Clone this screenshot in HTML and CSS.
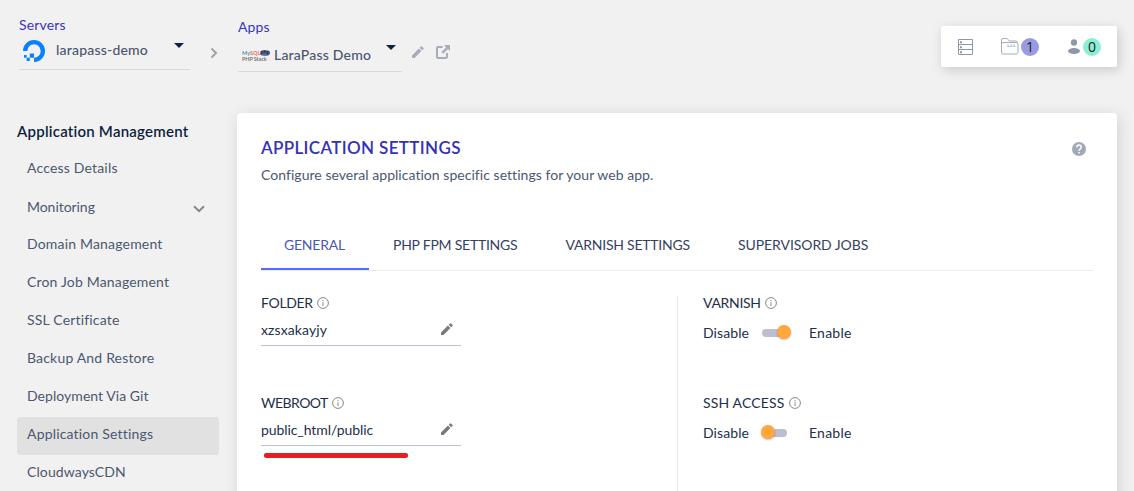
FILE: index.html
```html
<!DOCTYPE html>
<html lang="en">
<head>
<meta charset="utf-8">
<title>Application Settings</title>
<link rel="stylesheet" href="styles.css">
</head>
<body>
<svg class="defs" aria-hidden="true">
  <symbol id="pencil" viewBox="0 0 12 12"><path d="M0 9.400 6.900 2.500l2.500 2.500L2.500 11.900H0zM7.700 1.700 9 .4q.5-.5 1 0l1.500 1.500q.5.5 0 1L10.200 4.200z"/></symbol>
  <symbol id="info" viewBox="0 0 12 12"><circle cx="6" cy="6" r="5.400" fill="none" stroke="currentColor" stroke-width="1"/><path d="M5.500 5.200h1v3.900h-1zM5.500 3h1v1.200h-1z" fill="currentColor"/></symbol>
</svg>
<div class="page">
  <header class="topbar">
    <div class="picker picker-server">
      <div class="picker-label">Servers</div>
      <div class="picker-select">
        <svg class="ocean" viewBox="0 0 22 22"><path d="M11 22v-4.300A6.700 6.700 0 1 0 4.300 11H0A11 11 0 1 1 11 22z"/><path d="M6.800 13.500H11v4.200H6.800zM3.600 17.700h3.200v3.200H3.600zM1 15h2.600v2.700H1z"/></svg>
        <span class="picker-name">larapass-demo</span>
        <span class="caret"></span>
      </div>
    </div>
    <svg class="crumb" viewBox="0 0 8 12"><path d="M1.500 1.500 6 6l-4.500 4.500"/></svg>
    <div class="picker picker-app">
      <div class="picker-label">Apps</div>
      <div class="picker-select">
        <span class="stack">
          <span class="stack-top"><span class="my">My</span><span class="sql">SQL</span><span class="php">php</span></span>
          <span class="stack-name">PHP Stack</span>
        </span>
        <span class="picker-name">LaraPass Demo</span>
        <span class="caret"></span>
      </div>
    </div>
    <svg class="edit-app"><use href="#pencil"/></svg>
    <svg class="open-app" viewBox="0 0 14 14"><path d="M6.500 2H2.200Q1 2 1 3.200v8.600Q1 13 2.200 13h7.600q1.200 0 1.200-1.200V8" fill="none" stroke="#a5adba" stroke-width="2"/><path d="M8 0h6v6l-2-2-4.800 4.700-1.700-1.700L10.200 2.200z"/></svg>
    <div class="counts">
      <svg class="servers-icon" viewBox="0 0 16 16"><path d="M.5.5h14v15H.5zM.5 5.500h14M.5 10.500h14" fill="none" stroke="#8d97a8"/><path d="M2 2.200h2v2H2zM2 7.200h2v2H2zM2 12.200h2v2H2z" fill="#8d97a8"/></svg>
      <svg class="folder-icon" viewBox="0 0 18 17"><path d="M.5 14.500V2Q.5.500 2 .500h4.200L8.200 3H15q1 0 1 1v.8M.5 6.500Q.5 4.500 2 4.500h13.500q1.500 0 1.500 1.500v8.500q0 1.500-1.500 1.500H2Q.5 16 .5 14.500z" fill="none" stroke="#a5adba"/><path d="M6 7.200h9M6.500 8.500h8.500" stroke="#b4bac5" stroke-dasharray="2 1"/></svg>
      <span class="badge badge-projects">1</span>
      <svg class="user-icon" viewBox="0 0 12 16"><ellipse cx="6" cy="3.500" rx="3.100" ry="3.300"/><ellipse cx="6" cy="12" rx="6" ry="3"/></svg>
      <span class="badge badge-members">0</span>
    </div>
  </header>
  <div class="body">
    <nav class="sidebar">
      <h2 class="side-title">Application Management</h2>
      <a class="side-item">Access Details</a>
      <a class="side-item side-parent">Monitoring<svg class="chevron" viewBox="0 0 12 8"><path d="M1 1.200 6 6.200l5-5"/></svg></a>
      <a class="side-item">Domain Management</a>
      <a class="side-item">Cron Job Management</a>
      <a class="side-item">SSL Certificate</a>
      <a class="side-item">Backup And Restore</a>
      <a class="side-item side-git">Deployment Via Git</a>
      <a class="side-item side-active">Application Settings</a>
      <a class="side-item side-cdn">CloudwaysCDN</a>
    </nav>
    <main class="card">
      <div class="card-head">
        <h1 class="card-title">APPLICATION SETTINGS</h1>
        <svg class="help" viewBox="0 0 14 14"><circle cx="7" cy="7" r="7" fill="#a0a9b6"/><path d="M4.700 5.400Q4.800 3 7 3t2.300 2.100Q9.300 6.200 8 7.100q-1 .7-1 1.700" fill="none" stroke="#fff" stroke-width="1.400"/><path d="M6.200 10h1.600v1.500H6.200z" fill="#fff"/></svg>
      </div>
      <p class="card-sub">Configure several application specific settings for your web app.</p>
      <div class="tabs">
        <a class="tab tab-active">GENERAL</a>
        <a class="tab tab-php">PHP FPM SETTINGS</a>
        <a class="tab tab-varnish">VARNISH SETTINGS</a>
        <a class="tab tab-jobs">SUPERVISORD JOBS</a>
      </div>
      <div class="settings">
        <section class="col-left">
          <div class="field">
            <div class="label label-folder">FOLDER <svg class="info"><use href="#info"/></svg></div>
            <div class="input"><span class="value">xzsxakayjy</span><svg class="edit"><use href="#pencil"/></svg></div>
          </div>
          <div class="field">
            <div class="label label-webroot">WEBROOT <svg class="info"><use href="#info"/></svg></div>
            <div class="input"><span class="value value-root">public_html/public</span><svg class="edit"><use href="#pencil"/></svg></div>
            <div class="marker"></div>
          </div>
        </section>
        <section class="col-right">
          <div class="field">
            <div class="label label-varnish">VARNISH <svg class="info"><use href="#info"/></svg></div>
            <div class="toggle-row"><span class="off">Disable</span><span class="toggle toggle-on"><span class="knob"></span></span><span class="on">Enable</span></div>
          </div>
          <div class="field">
            <div class="label label-ssh">SSH ACCESS <svg class="info"><use href="#info"/></svg></div>
            <div class="toggle-row"><span class="off">Disable</span><span class="toggle"><span class="knob"></span></span><span class="on">Enable</span></div>
          </div>
        </section>
      </div>
    </main>
  </div>
</div>
</body>
</html>
```
FILE: styles.css
```css
* { box-sizing: border-box; }
body { margin: 0; background: #f1f1f1; font: 14px/20px Lato, "Open Sans", sans-serif; color: #1d2f4b; font-variant-ligatures: none; }
svg { display: block; flex: none; }
.defs { position: absolute; width: 0; height: 0; }
.page { height: 491px; overflow: hidden; }

.topbar { display: flex; align-items: flex-start; height: 113px; padding: 15px 17px 0 19px; }
.picker-label { color: #3935bd; letter-spacing: .15px; }
.picker-select { display: flex; align-items: center; height: 35px; border-bottom: 1px solid #d9d9d9; }
.picker-server { width: 171px; }
.picker-app { width: 164px; padding-top: 2px; }
.picker-name { font-weight: 500; color: #4a5670; letter-spacing: .2px; }
.picker-server .picker-name { padding-bottom: 4px; }
.picker-app .picker-name { padding-top: 1px; }
.caret { margin: 0 6px 13px auto; border: solid transparent; border-width: 5px 5px 0; border-top-color: #11224a; }
.ocean { width: 22px; height: 22px; margin: 0 11px 2px 4px; fill: #0a80ff; }
.crumb { width: 8px; height: 12px; margin: 32px 20px 0; fill: none; stroke: #9fa1a8; stroke-width: 2; }
.stack { width: 27px; margin: 3px 5px 0 4px; font-weight: 700; font-size: 5.500px; line-height: 6px; }
.stack-top { display: flex; align-items: center; }
.my { color: #4d93ad; }
.sql { color: #ec7157; }
.php { width: 11px; height: 6px; border-radius: 50%; background: #69739d; color: #252a49; text-align: center; line-height: 5px; }
.stack-name { display: block; color: #777; white-space: nowrap; letter-spacing: -.1px; }
.edit-app { width: 12px; height: 12px; margin: 31px 0 0 10px; fill: #a5adba; }
.open-app { width: 14px; height: 14px; margin: 30px 0 0 12px; fill: #a5adba; }
.counts { display: flex; align-items: center; width: 176px; height: 41px; margin: 11px 0 0 auto; padding-left: 17px; background: #fff; border-radius: 2px; box-shadow: 2px 3px 12px rgba(0,0,0,.17); }
.servers-icon { width: 16px; height: 16px; }
.folder-icon { width: 18px; height: 17px; margin-left: 27px; }
.user-icon { width: 12px; height: 16px; margin-left: 29px; fill: #8d97a8; }
.badge { width: 18px; height: 18px; border-radius: 50%; font: 14px/18px "Open Sans", sans-serif; color: #222; text-align: center; }
.badge-projects { margin-left: 2px; background: #989be0; }
.badge-members { margin-left: 3px; background: #8aefd3; }

.body { display: flex; gap: 18px; padding-left: 17px; }
.sidebar { width: 202px; padding-top: 8px; }
.side-title { margin: 0 0 10px; font-size: 15px; line-height: 20px; font-weight: 600; letter-spacing: .23px; color: #0d1f3d; white-space: nowrap; }
.side-item { display: flex; height: 38px; padding: 7px 10px; color: #4b5870; letter-spacing: .18px; }
.side-parent { padding: 8px 14px 0 10px; letter-spacing: -.05px; }
.side-git { letter-spacing: .05px; }
.side-cdn { letter-spacing: .1px; }
.chevron { width: 12px; height: 8px; margin: 8px 0 0 auto; fill: none; stroke: #85878a; stroke-width: 2; }
.side-active { background: #e1e1e1; border-radius: 4px; }

.card { width: 880px; height: 400px; padding: 24px 24px 0; background: #fff; border-radius: 4px; box-shadow: 2px 3px 16px rgba(0,0,0,.13); }
.card-head { display: flex; align-items: center; height: 22px; }
.card-title { margin: 0; font-size: 17px; line-height: 20px; font-weight: 600; letter-spacing: .35px; color: #3431b5; }
.help { width: 14px; height: 14px; margin: 1px 7px 0 auto; }
.card-sub { margin: 6px 0 0; color: #4b5870; letter-spacing: .04px; }
.tabs { display: flex; align-items: flex-start; height: 49px; margin-top: 37px; border-bottom: 1px solid #ebebed; }
.tab { height: 48px; padding: 13px 0 0 24px; color: #35425f; letter-spacing: -.24px; }
.tab-active { width: 108px; border-bottom: 2px solid #536dfe; padding-left: 23px; color: #4b57b8; }
.tab-php, .tab-varnish { width: 173px; }
.tab-varnish { padding-left: 23.500px; }
.tab-jobs { padding-left: 23px; letter-spacing: -.08px; }
.settings { display: flex; padding-top: 25px; }
.col-left { width: 417px; height: 220px; border-right: 1px solid #e7e7e9; }
.col-right { padding-left: 25px; }
.field { height: 100px; margin-top: -3px; margin-bottom: 3px; }
.label { display: flex; align-items: center; gap: 4.500px; letter-spacing: -.32px; }
.label-webroot { letter-spacing: -.53px; }
.label-ssh { letter-spacing: .15px; }
.info { width: 12px; height: 12px; color: #85878c; margin-bottom: 1px; }
.input { display: flex; align-items: flex-start; width: 200px; height: 33px; padding-top: 7px; border-bottom: 1px solid #bfc1d2; }
.value { letter-spacing: .1px; }
.value-root { letter-spacing: -.08px; }
.edit { width: 12px; height: 12px; margin: 3px 8px 0 auto; fill: #77797c; }
.marker { width: 144px; height: 5px; margin: 7px 0 0 3px; border-radius: 2px; background: #ed1c24; }
.toggle-row { display: flex; align-items: center; height: 20px; margin-top: 10px; }
.off { width: 60px; letter-spacing: .08px; }
.toggle { position: relative; width: 25px; height: 8px; margin: 0 22px 1px -1px; border-radius: 4px; background: #bbbfcf; }
.knob { position: absolute; top: -4px; left: -1px; width: 14px; height: 14px; border-radius: 50%; background: #ffa63d; box-shadow: 0 1px 2px rgba(0,0,0,.25); }
.toggle-on .knob { left: 15px; }
.on { letter-spacing: .22px; }
```
